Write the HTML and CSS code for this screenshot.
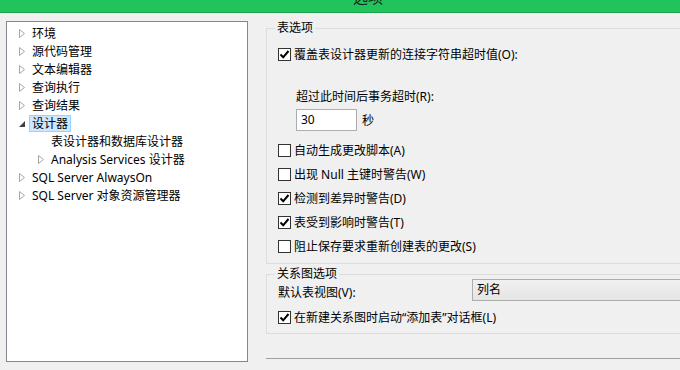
FILE: index.html
```html
<!DOCTYPE html>
<html lang="zh-CN">
<head>
<meta charset="utf-8">
<title>选项</title>
<link rel="stylesheet" href="styles.css">
</head>
<body>
<div class="titlebar"><span class="title">选项</span></div>
<div class="main">
  <div class="tree">
    <div class="row"><span class="exp"><svg width="6" height="9" viewBox="0 0 6 9"><path d="M0.5 0.5 L5.5 4.5 L0.5 8.5 Z" fill="none" stroke="#a6a6a6"/></svg></span><span class="lbl">环境</span></div>
    <div class="row"><span class="exp"><svg width="6" height="9" viewBox="0 0 6 9"><path d="M0.5 0.5 L5.5 4.5 L0.5 8.5 Z" fill="none" stroke="#a6a6a6"/></svg></span><span class="lbl">源代码管理</span></div>
    <div class="row"><span class="exp"><svg width="6" height="9" viewBox="0 0 6 9"><path d="M0.5 0.5 L5.5 4.5 L0.5 8.5 Z" fill="none" stroke="#a6a6a6"/></svg></span><span class="lbl">文本编辑器</span></div>
    <div class="row"><span class="exp"><svg width="6" height="9" viewBox="0 0 6 9"><path d="M0.5 0.5 L5.5 4.5 L0.5 8.5 Z" fill="none" stroke="#a6a6a6"/></svg></span><span class="lbl">查询执行</span></div>
    <div class="row"><span class="exp"><svg width="6" height="9" viewBox="0 0 6 9"><path d="M0.5 0.5 L5.5 4.5 L0.5 8.5 Z" fill="none" stroke="#a6a6a6"/></svg></span><span class="lbl">查询结果</span></div>
    <div class="row"><span class="exp"><svg width="6" height="9" viewBox="0 0 6 9"><path d="M0 8 L6 2 L6 8 Z" fill="#404040"/></svg></span><span class="lbl sel">设计器</span></div>
    <div class="row child"><span class="exp"></span><span class="lbl">表设计器和数据库设计器</span></div>
    <div class="row child"><span class="exp"><svg width="6" height="9" viewBox="0 0 6 9"><path d="M0.5 0.5 L5.5 4.5 L0.5 8.5 Z" fill="none" stroke="#a6a6a6"/></svg></span><span class="lbl">Analysis Services 设计器</span></div>
    <div class="row"><span class="exp"><svg width="6" height="9" viewBox="0 0 6 9"><path d="M0.5 0.5 L5.5 4.5 L0.5 8.5 Z" fill="none" stroke="#a6a6a6"/></svg></span><span class="lbl">SQL Server AlwaysOn</span></div>
    <div class="row"><span class="exp"><svg width="6" height="9" viewBox="0 0 6 9"><path d="M0.5 0.5 L5.5 4.5 L0.5 8.5 Z" fill="none" stroke="#a6a6a6"/></svg></span><span class="lbl">SQL Server 对象资源管理器</span></div>
  </div>
  <div class="pane">
    <div class="group g1">
      <span class="legend">表选项</span>
      <div class="check first"><span class="box on"><svg width="11" height="11" viewBox="0 0 11 11"><path d="M1.5 5.5 L4.2 8.3 L9.5 2" fill="none" stroke="#000" stroke-width="2"/></svg></span><span>覆盖表设计器更新的连接字符串超时值(O):</span></div>
      <div class="sublabel">超过此时间后事务超时(R):</div>
      <div class="inputrow"><div class="input">30</div><span class="unit">秒</span></div>
      <div class="check gap"><span class="box"></span><span>自动生成更改脚本(A)</span></div>
      <div class="check"><span class="box"></span><span>出现 Null 主键时警告(W)</span></div>
      <div class="check"><span class="box on"><svg width="11" height="11" viewBox="0 0 11 11"><path d="M1.5 5.5 L4.2 8.3 L9.5 2" fill="none" stroke="#000" stroke-width="2"/></svg></span><span>检测到差异时警告(D)</span></div>
      <div class="check"><span class="box on"><svg width="11" height="11" viewBox="0 0 11 11"><path d="M1.5 5.5 L4.2 8.3 L9.5 2" fill="none" stroke="#000" stroke-width="2"/></svg></span><span>表受到影响时警告(T)</span></div>
      <div class="check"><span class="box"></span><span>阻止保存要求重新创建表的更改(S)</span></div>
    </div>
    <div class="group g2">
      <span class="legend">关系图选项</span>
      <div class="comborow"><span class="combolabel">默认表视图(V):</span><div class="combo">列名</div></div>
      <div class="check"><span class="box on"><svg width="11" height="11" viewBox="0 0 11 11"><path d="M1.5 5.5 L4.2 8.3 L9.5 2" fill="none" stroke="#000" stroke-width="2"/></svg></span><span>在新建关系图时启动“添加表”对话框(L)</span></div>
    </div>
    <div class="separator"></div>
  </div>
</div>
</body>
</html>
```

FILE: styles.css
```css
html, body {
  margin: 0;
  padding: 0;
  width: 680px;
  height: 370px;
  overflow: hidden;
  background: #f0f0f0;
  font-family: "Noto Sans", "Noto Sans CJK SC", sans-serif;
  font-size: 12px;
  color: #000;
}

.titlebar {
  height: 12px;
  background: #21c45b;
  border-bottom: 1px solid #1ba44c;
  overflow: hidden;
  padding-left: 353px;
}

.title {
  display: block;
  font-family: "Noto Sans CJK SC", sans-serif;
  font-size: 15px;
  line-height: 15px;
  margin-top: -11px;
  color: #1c1c1c;
}

.main {
  display: flex;
  align-items: flex-start;
}

.tree {
  margin-left: 6px;
  margin-top: 8px;
  width: 231px;
  height: 337px;
  border: 1px solid #828790;
  background: #fff;
  padding: 2px 0 0 9px;
  flex: none;
}

.row {
  display: flex;
  align-items: center;
  height: 18px;
  white-space: nowrap;
}

.row.child {
  padding-left: 19px;
}

.exp {
  width: 13px;
  height: 18px;
  display: flex;
  align-items: center;
  flex: none;
}

.exp svg {
  margin-left: 3px;
}

.lbl {
  padding: 0 2px;
  border: 1px solid transparent;
  line-height: 15px;
}

.lbl.sel {
  background: #cce8ff;
  border-color: #99d1ff;
}

.pane {
  margin-left: 18px;
  width: 414px;
  flex: none;
}

.group {
  position: relative;
  border: 1px solid #dcdcdc;
  border-right: none;
  padding-left: 11px;
}

.legend {
  position: absolute;
  left: 8px;
  top: -10px;
  padding: 0 2px;
  background: #f0f0f0;
  line-height: 18px;
}

.g1 {
  margin-top: 15px;
  padding-top: 13px;
  padding-bottom: 5px;
}

.check {
  display: flex;
  align-items: center;
  height: 24px;
  white-space: nowrap;
}

.check.gap {
  margin-top: 7px;
}

.box {
  width: 11px;
  height: 11px;
  border: 1px solid #333;
  background: #fff;
  margin-right: 3px;
  flex: none;
  display: flex;
}

.sublabel {
  margin-top: 22px;
  margin-left: 18px;
  height: 18px;
  line-height: 18px;
}

.inputrow {
  display: flex;
  align-items: center;
  margin-top: 3px;
  margin-left: 18px;
}

.input {
  width: 55px;
  height: 20px;
  border: 1px solid #abadb3;
  background: #fff;
  padding-left: 4px;
  line-height: 20px;
}

.unit {
  margin-left: 5px;
}

.g2 {
  margin-top: 10px;
  padding-top: 4px;
  padding-bottom: 4px;
}

.comborow {
  display: flex;
  align-items: center;
  height: 22px;
}

.combolabel {
  width: 194px;
  flex: none;
  padding-top: 3px;
}

.combo {
  flex: 1;
  min-width: 0;
  height: 20px;
  border: 1px solid #acacac;
  border-right: none;
  background: linear-gradient(#f0f0f0, #e5e5e5);
  padding-left: 4px;
  line-height: 20px;
}

.g2 .check {
  margin-top: 4px;
}

.separator {
  margin-top: 24px;
  border-top: 1px solid #a0a0a0;
}
```
